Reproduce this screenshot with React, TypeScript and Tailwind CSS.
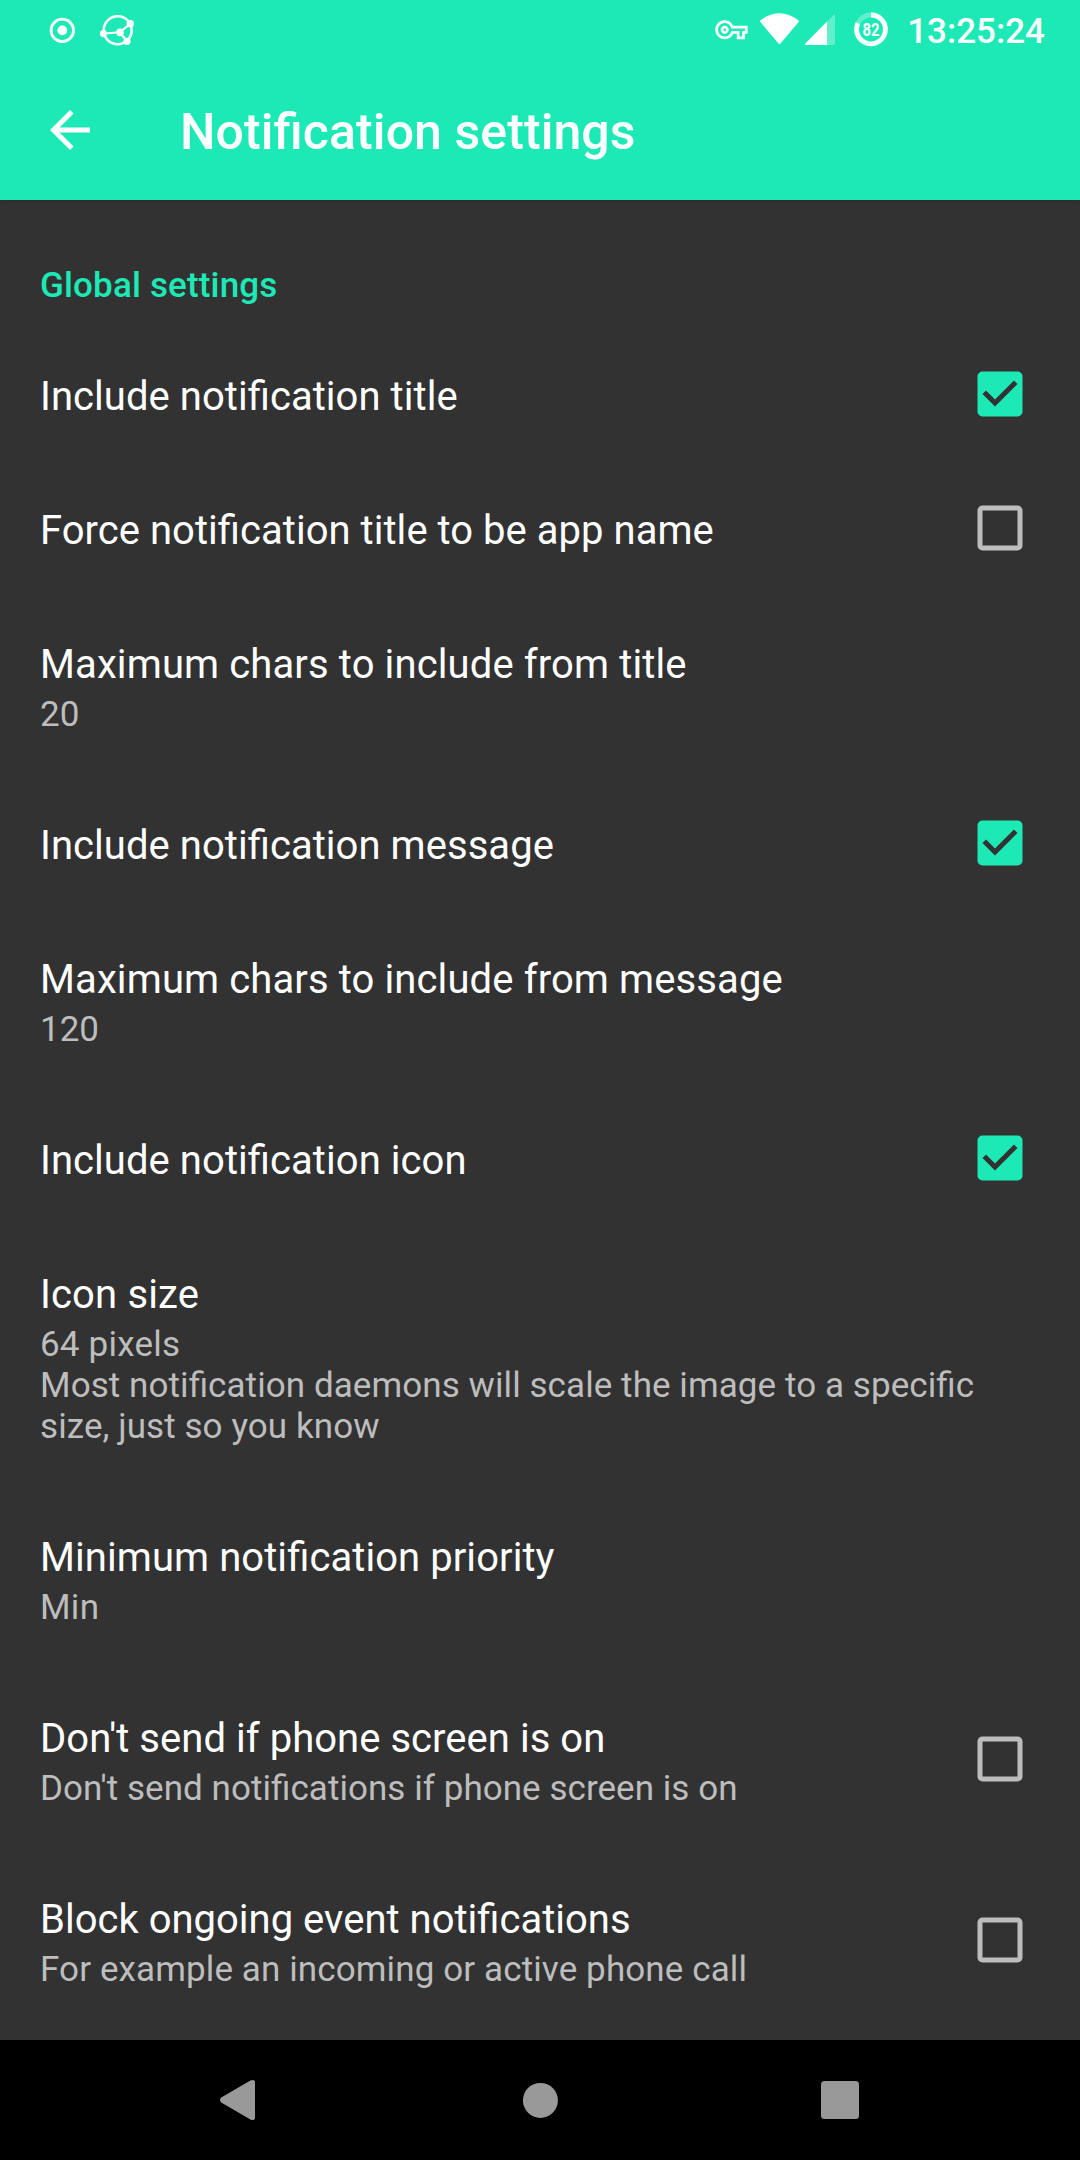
import React from "react";

type Line = { text: string; tracking?: string };

type Setting = {
  title: string;
  tracking: string;
  summary?: Line[];
  checked?: boolean;
};

const settings: Setting[] = [
  { title: "Include notification title", tracking: "tracking-[0.05px]", checked: true },
  { title: "Force notification title to be app name", tracking: "tracking-[0.035px]", checked: false },
  { title: "Maximum chars to include from title", tracking: "tracking-[0.115px]", summary: [{ text: "20" }] },
  { title: "Include notification message", tracking: "tracking-[0.05px]", checked: true },
  { title: "Maximum chars to include from message", tracking: "tracking-[0.11px]", summary: [{ text: "120" }] },
  { title: "Include notification icon", tracking: "tracking-[0.06px]", checked: true },
  {
    title: "Icon size",
    tracking: "tracking-[0.15px]",
    summary: [
      { text: "64 pixels", tracking: "tracking-[0.2px]" },
      {
        text: "Most notification daemons will scale the image to a specific size, just so you know",
        tracking: "tracking-[0.075px]",
      },
    ],
  },
  {
    title: "Minimum notification priority",
    tracking: "tracking-[0.07px]",
    summary: [{ text: "Min", tracking: "tracking-[0.3px]" }],
  },
  {
    title: "Don't send if phone screen is on",
    tracking: "tracking-[0.04px]",
    summary: [{ text: "Don't send notifications if phone screen is on", tracking: "tracking-[0.045px]" }],
    checked: false,
  },
  {
    title: "Block ongoing event notifications",
    tracking: "tracking-[0.01px]",
    summary: [{ text: "For example an incoming or active phone call", tracking: "tracking-[0.11px]" }],
    checked: false,
  },
];

function StatusBar() {
  return (
    <div className="flex h-[60px] items-center justify-between pr-[35px] pl-[48px]">
      <div className="flex h-[60px] items-center gap-[24px]">
        <svg width="28" height="60" viewBox="48 0 28 60" fill="none">
          <circle cx="62.3" cy="30.4" r="11.2" stroke="white" strokeWidth="2.8" />
          <circle cx="62.3" cy="30.4" r="4.9" fill="white" />
        </svg>
        <svg width="36" height="60" viewBox="100 0 36 60" fill="none">
          <circle cx="117.7" cy="30.3" r="14" stroke="white" strokeWidth="2.6" />
          <path d="M104 33.5L119.7 32.3L130.3 23.8M119.7 32.3L127 41.3" stroke="white" strokeWidth="2.2" />
          <circle cx="103.4" cy="33.6" r="3.6" fill="white" />
          <circle cx="120" cy="32.4" r="3.8" fill="white" />
          <circle cx="130.3" cy="23.8" r="3.7" fill="white" />
          <circle cx="127" cy="41.3" r="3.6" fill="white" />
        </svg>
      </div>
      <div className="flex h-[60px] items-center">
        <svg width="194" height="60" viewBox="713 0 194 60" fill="none">
          <path
            transform="translate(715.3 13.6) scale(1.345)"
            fill="white"
            d="M22 19h-6v-4h-2.68c-1.14 2.42-3.6 4-6.32 4-3.86 0-7-3.14-7-7s3.14-7 7-7c2.72 0 5.17 1.58 6.32 4H24v6h-2v4zm-4-2h2v-4h2v-2H11.94l-.23-.67C11.01 8.34 9.11 7 7 7c-2.76 0-5 2.24-5 5s2.24 5 5 5c2.11 0 4.01-1.34 4.71-3.33l.23-.67H18v4zM7 15c-1.65 0-3-1.35-3-3s1.35-3 3-3 3 1.35 3 3-1.35 3-3 3zm0-4c-.55 0-1 .45-1 1s.45 1 1 1 1-.45 1-1-.45-1-1-1z"
          />
          <path d="M760.6 20.2Q779.5 6.4 798.4 20.2Q799.4 21 798.6 22L780.5 43.4Q779.5 44.5 778.5 43.4L760.4 22Q759.6 21 760.6 20.2Z" fill="white" />
          <path d="M833.2 15.4Q835 14 835 16.2V43.6Q835 45 833.6 45H806.4Q804 45 805.6 43.2Z" fill="white" fillOpacity="0.3" />
          <path d="M827 21.4V45H806.4Q804 45 805.6 43.2Z" fill="white" />
          <circle cx="871" cy="29.4" r="14.4" stroke="white" strokeOpacity="0.3" strokeWidth="4.8" />
          <path d="M871 15A14.4 14.4 0 1 1 857.98 23.27" stroke="white" strokeWidth="4.8" />
          <text x="871.1" y="36" textAnchor="middle" fontSize="17.5" textLength="17" lengthAdjust="spacingAndGlyphs" fontWeight="700" fill="white">82</text>
        </svg>
        <span className="pt-[3px] text-[35px] leading-[57px] font-medium">13:25:24</span>
      </div>
    </div>
  );
}

function AppBar() {
  return (
    <div className="flex h-[140px] items-center gap-20 px-10">
      <svg width="60" height="60" viewBox="0 0 24 24" fill="white">
        <path d="M20 11H7.83l5.59-5.59L12 4l-8 8 8 8 1.41-1.41L7.83 13H20v-2z" />
      </svg>
      <h1 className="pt-[3px] text-[50px] leading-[60px] font-medium tracking-[0.08px]">Notification settings</h1>
    </div>
  );
}

function Checkbox({ checked }: { checked: boolean }) {
  return (
    <svg width="60" height="60" viewBox="0 0 24 24" className="mr-2.5 shrink-0">
      {checked ? (
        <>
          <rect x="3" y="3" width="18" height="18" rx="2" fill="#1de9b6" />
          <path d="M10 17L5 12l1.41-1.41L10 14.17l7.59-7.59L19 8l-9 9z" fill="#323232" />
        </>
      ) : (
        <rect x="4" y="4" width="16" height="16" rx="1" fill="none" stroke="#bdbdbd" strokeWidth="2" />
      )}
    </svg>
  );
}

function SettingRow({ title, tracking, summary, checked }: Setting) {
  return (
    <div className="flex items-center justify-between p-10">
      <div className="flex flex-1 flex-col">
        <span className={`h-[54px] pt-[3px] text-[40px] leading-[54px] ${tracking}`}>{title}</span>
        {summary && (
          <div className="pt-[5px] pb-px text-[35px] leading-[41px] text-[#bdbdbd]">
            {summary.map((line) => (
              <p key={line.text} className={line.tracking}>
                {line.text}
              </p>
            ))}
          </div>
        )}
      </div>
      {checked !== undefined && (
        <div className={summary ? "-mt-2 -mb-[7px] flex" : "-my-2 flex"}>
          <Checkbox checked={checked} />
        </div>
      )}
    </div>
  );
}

function NavigationBar() {
  return (
    <div className="flex h-[120px] shrink-0 items-center justify-around bg-black px-[90px]">
      <svg width="60" height="60" viewBox="0 0 60 60" fill="#999999">
        <path d="M11.2 27.6L40.4 10.5Q45 8.8 45 12.8V47.2Q45 51.2 40.4 49.5L11.2 32.4Q8.6 30 11.2 27.6Z" />
      </svg>
      <svg width="60" height="60" viewBox="0 0 60 60" fill="#999999">
        <circle cx="30.4" cy="30.4" r="17.5" />
      </svg>
      <svg width="60" height="60" viewBox="0 0 60 60" fill="#999999">
        <rect x="11" y="11" width="38" height="38" rx="3.5" />
      </svg>
    </div>
  );
}

export default function App() {
  return (
    <div className="flex h-[2160px] w-[1080px] flex-col overflow-hidden bg-[#323232] font-['Roboto',sans-serif] text-white [font-feature-settings:'liga'_1]">
      <header className="relative z-10 h-[200px] shrink-0 bg-[#1de9b6] shadow-[0_1px_4px_rgba(0,0,0,0.15)]">
        <StatusBar />
        <AppBar />
      </header>
      <main className="flex-1 overflow-hidden">
        <h2 className="h-[127px] px-10 pt-[65px] text-[35px] leading-[41px] font-medium tracking-[0.16px] text-[#1de9b6]">
          Global settings
        </h2>
        {settings.map((setting) => (
          <SettingRow key={setting.title} {...setting} />
        ))}
      </main>
      <NavigationBar />
    </div>
  );
}
